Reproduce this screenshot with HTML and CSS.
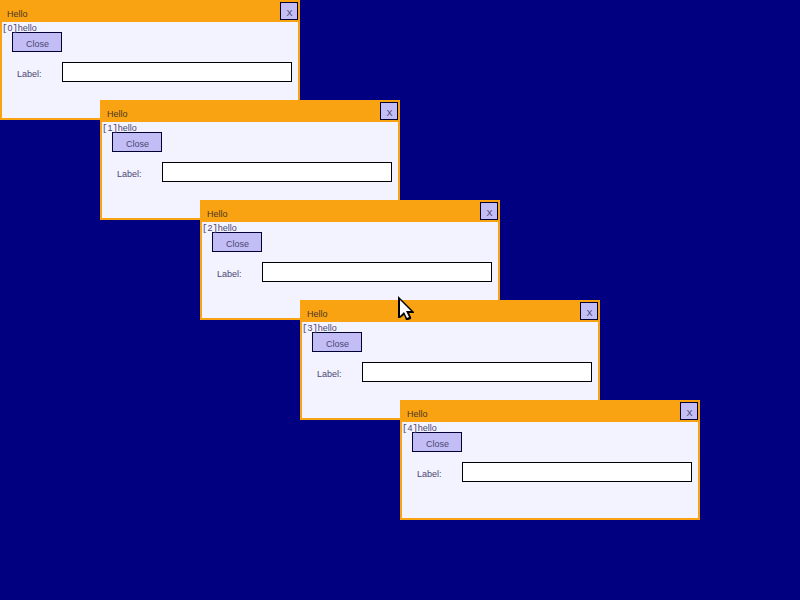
FILE: index.html
```html
<!DOCTYPE html>
<html lang="en">
<head>
<meta charset="utf-8">
<title>Desktop</title>
<link rel="stylesheet" href="styles.css">
</head>
<body>
<main class="desktop">
  <section class="window window-0">
    <header class="titlebar"><h2 class="title">Hello</h2><button class="button dismiss" type="button">X</button></header>
    <p class="message"><span class="bracket">[</span>0<span class="bracket">]</span>hello</p>
    <button class="button close" type="button">Close</button>
    <div class="field"><label class="label" for="field-0">Label:</label><input class="input" id="field-0" type="text"></div>
  </section>
  <section class="window window-1">
    <header class="titlebar"><h2 class="title">Hello</h2><button class="button dismiss" type="button">X</button></header>
    <p class="message"><span class="bracket">[</span>1<span class="bracket">]</span>hello</p>
    <button class="button close" type="button">Close</button>
    <div class="field"><label class="label" for="field-1">Label:</label><input class="input" id="field-1" type="text"></div>
  </section>
  <section class="window window-2">
    <header class="titlebar"><h2 class="title">Hello</h2><button class="button dismiss" type="button">X</button></header>
    <p class="message"><span class="bracket">[</span>2<span class="bracket">]</span>hello</p>
    <button class="button close" type="button">Close</button>
    <div class="field"><label class="label" for="field-2">Label:</label><input class="input" id="field-2" type="text"></div>
  </section>
  <section class="window window-3">
    <header class="titlebar"><h2 class="title">Hello</h2><button class="button dismiss" type="button">X</button></header>
    <p class="message"><span class="bracket">[</span>3<span class="bracket">]</span>hello</p>
    <button class="button close" type="button">Close</button>
    <div class="field"><label class="label" for="field-3">Label:</label><input class="input" id="field-3" type="text"></div>
  </section>
  <section class="window window-4">
    <header class="titlebar"><h2 class="title">Hello</h2><button class="button dismiss" type="button">X</button></header>
    <p class="message"><span class="bracket">[</span>4<span class="bracket">]</span>hello</p>
    <button class="button close" type="button">Close</button>
    <div class="field"><label class="label" for="field-4">Label:</label><input class="input" id="field-4" type="text"></div>
  </section>
  <svg class="pointer" width="16" height="25" viewBox="0 0 16 25" aria-hidden="true">
    <path d="M0 0L16 16V17H11L13 21V23L10 24H8L6 19L2 22H0Z" fill="#000"/>
    <path d="M2 4L13 15H8L11 21L9 22L6 16L2 20Z" fill="#fff"/>
  </svg>
</main>
</body>
</html>
```
FILE: styles.css
```css
* {
  box-sizing: border-box;
}

body {
  margin: 0;
  background: #000080;
  color: #4a4672;
  font: 9px/10px "Liberation Sans", Arial, sans-serif;
}

.desktop {
  position: relative;
  min-height: 100vh;
  overflow: hidden;
}

.window {
  position: absolute;
  width: 300px;
  padding-bottom: 36px;
  border: 2px solid #faa312;
  background: #f3f3ff;
}

.window-0 { left: 0; top: 0; }
.window-1 { left: 100px; top: 100px; }
.window-2 { left: 200px; top: 200px; }
.window-3 { left: 300px; top: 300px; }
.window-4 { left: 400px; top: 400px; }

.titlebar {
  display: flex;
  align-items: flex-start;
  justify-content: space-between;
  height: 20px;
  padding-left: 5px;
  background: #faa312;
}

.title {
  margin: 0;
  padding-top: 7px;
  color: #4c3724;
  font-size: 9px;
  font-weight: normal;
}

.button {
  display: block;
  padding: 4px 0 0 1px;
  border: 1px solid #000033;
  background: #c3bdf5;
  color: inherit;
  font: inherit;
  text-align: center;
}

.dismiss {
  width: 18px;
  height: 18px;
}

.message {
  height: 10px;
  margin: 0;
  padding-top: 2px;
  line-height: 9px;
}

.bracket {
  font-family: "Liberation Mono", monospace;
}

.close {
  width: 50px;
  height: 20px;
  margin-left: 10px;
}

.field {
  display: flex;
  align-items: center;
  margin: 10px 6px 0 15px;
}

.label {
  flex: 0 0 45px;
  padding-top: 3px;
}

.input {
  flex: 1;
  min-width: 0;
  height: 20px;
  padding: 2px 4px;
  border: 1px solid #000;
  border-radius: 0;
  background: #fff;
  font: inherit;
}

.pointer {
  position: absolute;
  left: 398px;
  top: 296px;
}
```
